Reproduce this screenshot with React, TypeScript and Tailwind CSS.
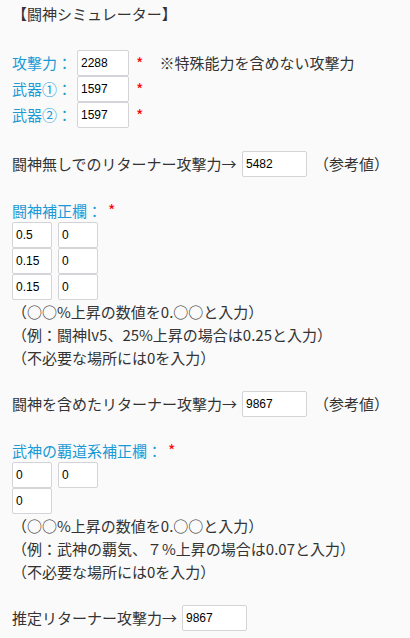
import { useState } from 'react'

const font = { fontFamily: '"Noto Sans CJK JP", "Noto Sans", sans-serif' }

function Num({ value, w = 'w-[52px]' }: { value: string; w?: string }) {
  const [v, setV] = useState(value)
  return (
    <input
      value={v}
      onChange={(e) => setV(e.target.value)}
      className={`${w} h-[26px] bg-white border border-[#d4d4d8] rounded-[2px] pl-[3px] text-[12px] text-black outline-none font-['Liberation_Sans',sans-serif]`}
    />
  )
}

function Star() {
  return <span className="text-[#ff0000] text-[16px]">*</span>
}

function Notes({ example }: { example: string }) {
  return (
    <div className="leading-[23px]">
      <p>（○○%上昇の数値を0.○○と入力）</p>
      <p>{example}</p>
      <p>（不必要な場所には0を入力）</p>
    </div>
  )
}

function StatRow({ label, value, note }: { label: string; value: string; note?: string }) {
  return (
    <div className="flex items-center h-[26px]">
      <span className="w-[65px] text-[#1a9ad6]">{label}</span>
      <Num value={value} />
      <span className="ml-[7px]"><Star /></span>
      {note && <span className="ml-[16px]">{note}</span>}
    </div>
  )
}

function ResultRow({ label, value, labelW, hint }: { label: string; value: string; labelW: string; hint?: boolean }) {
  return (
    <div className="flex items-center h-[26px]">
      <span className={labelW}>{label}</span>
      <Num value={value} w="w-[65px]" />
      {hint && <span className="ml-[7px]">（参考値）</span>}
    </div>
  )
}

export default function App() {
  return (
    <div
      style={font}
      className="min-h-[638px] w-[410px] bg-[#fafafa] text-[#333] text-[15px] pl-[12px] pt-[2px]"
    >
      {/* Title */}
      <p className="leading-[23px]">【闘神シミュレーター】</p>

      {/* Base stats */}
      <div className="mt-[25px] flex flex-col">
        <StatRow label="攻撃力：" value="2288" note="※特殊能力を含めない攻撃力" />
        <StatRow label="武器①：" value="1597" />
        <StatRow label="武器②：" value="1597" />
      </div>

      <div className="mt-[23px]">
        <ResultRow label="闘神無しでのリターナー攻撃力→" value="5482" labelW="w-[230px]" hint />
      </div>

      {/* Toushin correction */}
      <p className="mt-[22px] leading-[23px]">
        <span className="text-[#1a9ad6]">闘神補正欄：</span>
        <span className="ml-[6px]"><Star /></span>
      </p>
      <div className="grid grid-cols-[40px_40px] gap-x-[6px] w-fit">
        {['0.5', '0', '0.15', '0', '0.15', '0'].map((v, i) => (
          <Num key={i} value={v} w="w-[40px]" />
        ))}
      </div>
      <Notes example="（例：闘神lv5、25%上昇の場合は0.25と入力）" />

      <div className="mt-[22px]">
        <ResultRow label="闘神を含めたリターナー攻撃力→" value="9867" labelW="w-[230px]" hint />
      </div>

      {/* Bushin correction */}
      <p className="mt-[22px] leading-[23px]">
        <span className="text-[#1a9ad6]">武神の覇道系補正欄：</span>
        <span className="ml-[6px]"><Star /></span>
      </p>
      <div className="grid grid-cols-[40px_40px] gap-x-[6px] w-fit">
        <Num value="0" w="w-[40px]" />
        <Num value="0" w="w-[40px]" />
        <Num value="0" w="w-[40px]" />
      </div>
      <Notes example="（例：武神の覇気、７%上昇の場合は0.07と入力）" />

      {/* Estimate */}
      <div className="mt-[22px]">
        <ResultRow label="推定リターナー攻撃力→" value="9867" labelW="w-[170px]" />
      </div>
    </div>
  )
}
